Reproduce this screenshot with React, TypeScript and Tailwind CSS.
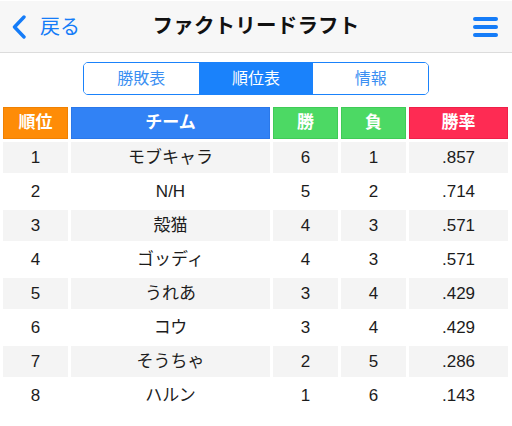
import React from 'react';

const rows = [
  { rank: 1, team: 'モブキャラ', w: 6, l: 1, pct: '.857' },
  { rank: 2, team: 'N/H', w: 5, l: 2, pct: '.714' },
  { rank: 3, team: '殻猫', w: 4, l: 3, pct: '.571' },
  { rank: 4, team: 'ゴッディ', w: 4, l: 3, pct: '.571' },
  { rank: 5, team: 'うれあ', w: 3, l: 4, pct: '.429' },
  { rank: 6, team: 'コウ', w: 3, l: 4, pct: '.429' },
  { rank: 7, team: 'そうちゃ', w: 2, l: 5, pct: '.286' },
  { rank: 8, team: 'ハルン', w: 1, l: 6, pct: '.143' },
];

const tabs = ['勝敗表', '順位表', '情報'];

const App: React.FC = () => {
  return (
    <div
      className="w-[512px] h-[426px] bg-white overflow-hidden"
      style={{ fontFamily: '"Liberation Sans", "Noto Sans CJK JP", sans-serif' }}
    >
      {/* Navigation bar */}
      <header className="relative h-[53px] border-t border-white bg-[#f7f7f7] border-b border-b-[#dcdcdc] flex items-center justify-between">
        <button className="flex items-center pl-[11px] text-[#157cf8]">
          <svg width="17" height="24" viewBox="0 0 17 24" className="mr-[12px]">
            <path d="M13 2 L3.5 12 L13 22" fill="none" stroke="#157cf8" strokeWidth="3.4" strokeLinecap="round" strokeLinejoin="round" />
          </svg>
          <span className="text-[20px] leading-none">戻る</span>
        </button>
        <h1 className="absolute left-1/2 -translate-x-1/2 text-[20.5px] font-bold text-[#111] leading-none tracking-[0.2px]">
          ファクトリードラフト
        </h1>
        <button className="pr-[14px] flex flex-col gap-[4px]">
          <span className="block w-[25px] h-[4px] rounded-full bg-[#157cf8]" />
          <span className="block w-[25px] h-[4px] rounded-full bg-[#157cf8]" />
          <span className="block w-[25px] h-[4px] rounded-full bg-[#157cf8]" />
        </button>
      </header>

      {/* Segmented control */}
      <div className="flex justify-center pt-[9px]">
        <div className="flex ml-[0px] w-[346px] h-[33px] rounded-[5px] border border-[#1a82fb] overflow-hidden">
          {tabs.map((t, i) => (
            <div
              key={t}
              className={
                'flex-1 flex items-center justify-center text-[16px] ' +
                (i === 1 ? 'bg-[#1a82fb] text-white' : 'bg-white text-[#3b8ff2]')
              }
            >
              {t}
            </div>
          ))}
        </div>
      </div>

      {/* Standings table */}
      <div className="mt-[12px] px-[3px] grid grid-cols-[65px_199px_65px_65px_99px] gap-x-[3px] gap-y-[3px] text-[17px] text-[#1c1c1c]">
        <div className="h-[32px] flex items-center justify-center bg-[#fe8c07] border border-[#ef8103] text-white font-bold">順位</div>
        <div className="h-[32px] flex items-center justify-center bg-[#3182f5] border border-[#2a78ea] text-white font-bold">チーム</div>
        <div className="h-[32px] flex items-center justify-center bg-[#4cd964] border border-[#3fcb57] text-white font-bold">勝</div>
        <div className="h-[32px] flex items-center justify-center bg-[#4cd964] border border-[#3fcb57] text-white font-bold">負</div>
        <div className="h-[32px] flex items-center justify-center bg-[#fe2b53] border border-[#ee2049] text-white font-bold">勝率</div>
        {rows.map((r, i) => {
          const bg = i % 2 === 0 ? 'bg-[#f4f4f4]' : 'bg-white';
          return (
            <React.Fragment key={r.rank}>
              <div className={'h-[31px] flex items-center justify-center ' + bg}>{r.rank}</div>
              <div className={'h-[31px] flex items-center justify-center ' + bg}>{r.team}</div>
              <div className={'h-[31px] flex items-center justify-center ' + bg}>{r.w}</div>
              <div className={'h-[31px] flex items-center justify-center ' + bg}>{r.l}</div>
              <div className={'h-[31px] flex items-center justify-center ' + bg}>{r.pct}</div>
            </React.Fragment>
          );
        })}
      </div>
    </div>
  );
};

export default App;
